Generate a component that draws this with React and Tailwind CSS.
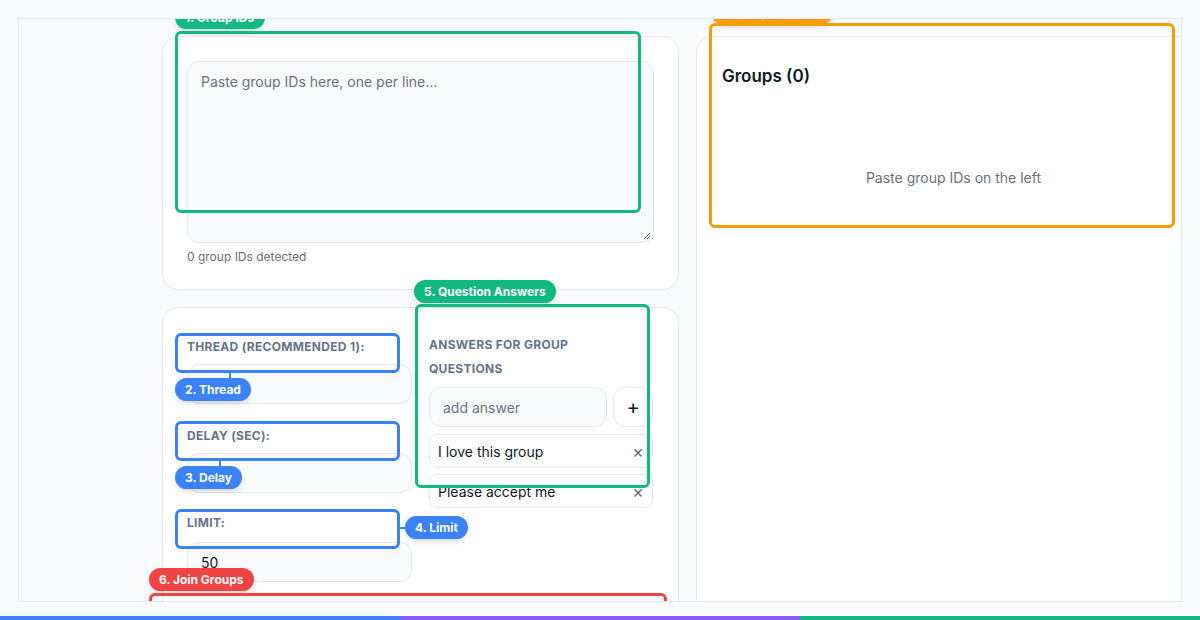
export default function App() {
  const label = "text-[12px] font-bold tracking-wide text-[#64748b] uppercase";
  const input = "h-[40px] rounded-xl border border-[#e5e7eb] bg-[#f8fafc]";
  const pill = "absolute rounded-full px-2.5 h-[23px] flex items-center text-[12px] font-bold text-white shadow-md whitespace-nowrap";
  return (
    <div className="w-[1200px] h-[620px] bg-[#f8fafc] relative overflow-hidden" style={{ fontFamily: "Inter, 'Noto Sans', sans-serif" }}>
      <div className="absolute left-[18px] top-[18px] w-[1164px] h-[584px] border border-[#e2e8f0] overflow-hidden bg-[#f8fafc]">
        <div className="flex gap-[17px] pl-[143px] pt-[17px]">
          <div className="w-[517px] flex flex-col gap-[17px] shrink-0">
            <div className="h-[254px] rounded-2xl border border-[#e5e7eb] bg-white px-[24px] pt-[24px]">
              <div className="h-[182px] rounded-xl border border-[#e5e7eb] bg-[#f8fafc] px-[13px] py-[9px] text-[14px] text-[#6b7280] relative">
                Paste group IDs here, one per line...
                <svg className="absolute right-[2px] bottom-[2px]" width="8" height="8" viewBox="0 0 8 8"><path d="M7 1L1 7M7 4L4 7" stroke="#6b7280" strokeWidth="1"/></svg>
              </div>
              <div className="mt-[5px] text-[12px] text-[#6b7280]">0 group IDs detected</div>
            </div>
            <div className="h-[320px] rounded-2xl border border-[#e5e7eb] bg-white px-[24px] pt-[30px] flex gap-[17px]">
              <div className="w-[225px] flex flex-col">
                <div className={label}>Thread (recommended 1):</div>
                <div className={`${input} mt-[8px]`}></div>
                <div className={`${label} mt-[23px]`}>Delay (sec):</div>
                <div className={`${input} mt-[8px]`}></div>
                <div className={`${label} mt-[21px]`}>Limit:</div>
                <div className={`${input} mt-[10px] px-[13px] flex items-center text-[14px] text-[#111827]`}>50</div>
              </div>
              <div className="w-[224px] flex flex-col">
                <div className={`${label} leading-[24px] mt-[-5px]`}>Answers for group<br/>questions</div>
                <div className="flex gap-[6px] mt-[6px]">
                  <div className="w-[178px] h-[40px] rounded-xl border border-[#e5e7eb] bg-[#f8fafc] px-[13px] flex items-center text-[14px] text-[#6b7280]">add answer</div>
                  <div className="w-[40px] h-[40px] rounded-xl border border-[#e5e7eb] bg-white flex items-center justify-center text-[20px] text-[#111827]">+</div>
                </div>
                <div className="mt-[7px] h-[34px] rounded-lg border border-[#e5e7eb] px-[8px] flex items-center justify-between text-[14px] text-[#111827]">I love this group<span className="text-[#6b7280] text-[18px]">×</span></div>
                <div className="mt-[6px] h-[34px] rounded-lg border border-[#e5e7eb] px-[8px] flex items-center justify-between text-[14px] text-[#111827]">Please accept me<span className="text-[#6b7280] text-[18px]">×</span></div>
              </div>
            </div>
          </div>
          <div className="w-[520px] h-[620px] shrink-0 rounded-2xl border border-[#e5e7eb] bg-white px-[25px] pt-[27px]">
            <div className="text-[17px] font-semibold text-[#111827]">Groups (0)</div>
            <div className="mt-[77px] text-center text-[14px] text-[#6b7280] w-[463px]">Paste group IDs on the left</div>
          </div>
        </div>
        <div className={`${pill} bg-[#10b981] left-[156px] top-[-13px] w-[90px]`}>1. Group IDs</div>
        <div className="absolute left-[156px] top-[12px] w-[466px] h-[182px] border-[3px] border-[#10b981] rounded-md"></div>
        <div className={`${pill} bg-[#f59e0b] left-[692px] top-[-18px] w-[122px]`}>7. Groups</div>
        <div className="absolute left-[690px] top-[4px] w-[466px] h-[205px] border-[3px] border-[#f59e0b] rounded-md"></div>

        <div className="absolute left-[156px] top-[314px] w-[225px] h-[40px] border-[3px] border-[#3b82f6] rounded-md"></div>
        <div className="absolute left-[210px] top-[353px] w-[2px] h-[7px] bg-[#3b82f6]"></div>
        <div className={`${pill} bg-[#3b82f6] left-[156px] top-[359px]`}>2. Thread</div>
        <div className="absolute left-[156px] top-[402px] w-[225px] h-[40px] border-[3px] border-[#3b82f6] rounded-md"></div>
        <div className="absolute left-[200px] top-[441px] w-[2px] h-[7px] bg-[#3b82f6]"></div>
        <div className={`${pill} bg-[#3b82f6] left-[156px] top-[447px]`}>3. Delay</div>
        <div className="absolute left-[156px] top-[490px] w-[225px] h-[40px] border-[3px] border-[#3b82f6] rounded-md"></div>
        <div className="absolute left-[380px] top-[508px] w-[8px] h-[2px] bg-[#3b82f6]"></div>
        <div className={`${pill} bg-[#3b82f6] left-[386px] top-[497px]`}>4. Limit</div>

        <div className={`${pill} bg-[#10b981] left-[395px] top-[261px]`}>5. Question Answers</div>
        <div className="absolute left-[396px] top-[285px] w-[235px] h-[184px] border-[3px] border-[#10b981] rounded-md"></div>

        <div className={`${pill} bg-[#ef4444] left-[130px] top-[549px]`}>6. Join Groups</div>
        <div className="absolute left-[130px] top-[574px] w-[518px] h-[60px] border-[3px] border-[#ef4444] rounded-md"></div>
      </div>
      <div className="absolute left-0 bottom-0 w-full h-[4px] flex">
        <div className="flex-1 bg-[#3b82f6]"></div>
        <div className="flex-1 bg-[#8b5cf6]"></div>
        <div className="flex-1 bg-[#10b981]"></div>
      </div>
    </div>
  );
}
